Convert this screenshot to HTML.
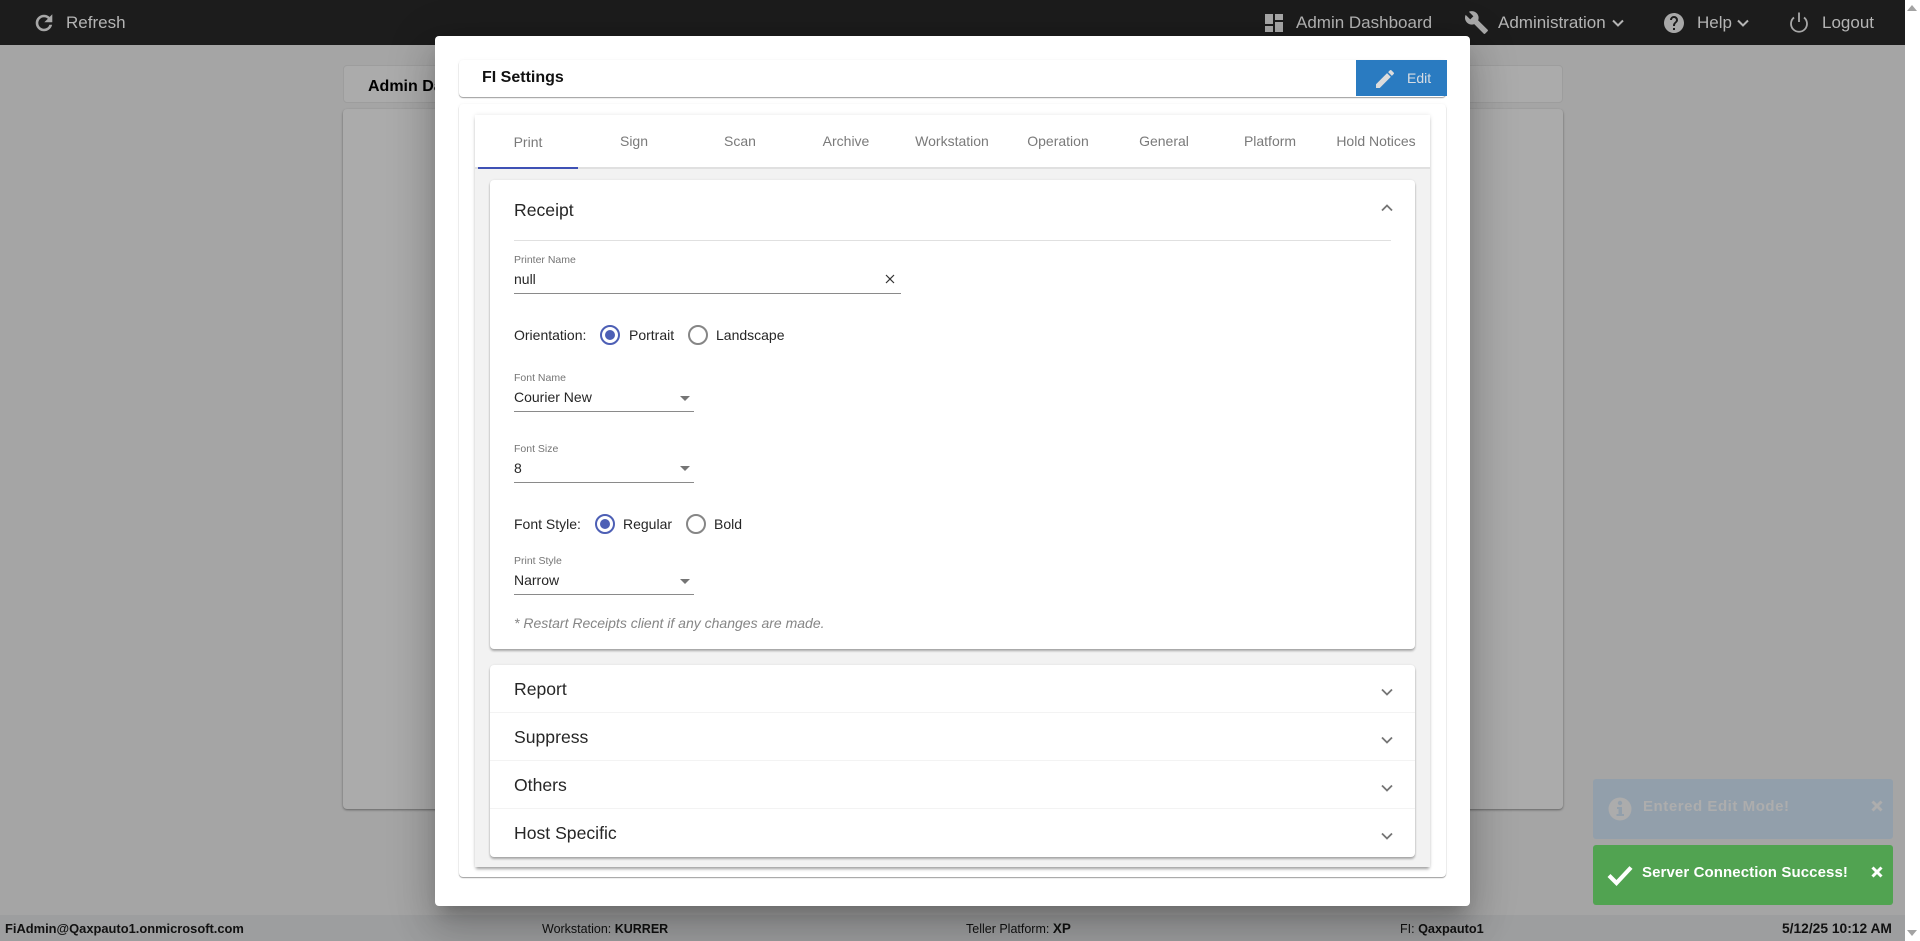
<!DOCTYPE html>
<html lang="en"><head><meta charset="utf-8"><title>FI Settings</title>
<style>
html,body{margin:0;padding:0;width:1920px;height:941px;overflow:hidden;background:#fff;font-family:"Liberation Sans",Arial,sans-serif}
div,span,svg{position:absolute;box-sizing:border-box}
.t{white-space:nowrap;line-height:20px;height:20px}
.nav{color:#b4b4b4;font-size:17px;line-height:24px;height:24px;white-space:nowrap}
.ic{fill:#a8a8a8}
.tab{top:131px;width:106px;text-align:center;font-size:14px;color:#7a7a7a;line-height:20px;white-space:nowrap}
.lbl{left:514px;font-size:10.5px;color:#757575;line-height:14px;white-space:nowrap}
.val{left:514px;font-size:14px;color:#262626;line-height:20px;white-space:nowrap}
.ul{left:514px;height:1px;background:#8a8a8a}
.arr{width:0;height:0;border-left:5px solid transparent;border-right:5px solid transparent;border-top:5px solid #757575}
.radio{width:20px;height:20px;border:2px solid #868686;border-radius:50%}
.radio.on{border-color:#4d5fb5}
.radio.on:after{content:"";position:absolute;left:3px;top:3px;width:10px;height:10px;border-radius:50%;background:#4d5fb5}
.h{left:514px;font-size:17.6px;color:#262626;line-height:24px;white-space:nowrap}
.f{top:919px;font-size:12.5px;color:#111;line-height:20px;white-space:nowrap}
.f b{font-size:12.7px}
</style></head><body>
<div style="left:0;top:0;width:1905px;height:941px;background:#a5a5a5;overflow:hidden">
  <div style="left:0;top:915px;width:1905px;height:26px;background:#9d9e9f"></div>
  <div style="left:343px;top:65px;width:1220px;height:38px;background:#ababab;border:1px solid #9d9d9d;border-radius:4px"></div>
  <div style="left:343px;top:109px;width:1220px;height:700px;background:#ababab;border-radius:4px;box-shadow:0 1px 2px rgba(0,0,0,.4)"></div>
  <div class="t" style="left:368px;top:77px;font-size:16px;font-weight:bold;color:#000">Admin Dashboard</div>
</div>
<div style="left:1905px;top:0;width:15px;height:941px;background:#fff"></div>
<div style="left:1907px;top:5px;width:0;height:0;border-left:5px solid transparent;border-right:5px solid transparent;border-bottom:6px solid #a3a3a3"></div>
<div style="left:1907px;top:930px;width:0;height:0;border-left:5px solid transparent;border-right:5px solid transparent;border-top:6px solid #a3a3a3"></div>

<!-- top bar -->
<div style="left:0;top:0;width:1905px;height:45px;background:#1c1c1c"></div>
<svg style="left:32px;top:11px" width="24" height="24" viewBox="0 0 24 24"><path class="ic" stroke="#a8a8a8" stroke-width=".6" d="M17.65,6.35C16.2,4.9 14.21,4 12,4A8,8 0 0,0 4,12A8,8 0 0,0 12,20C15.73,20 18.84,17.45 19.73,14H17.65C16.83,16.33 14.61,18 12,18A6,6 0 0,1 6,12A6,6 0 0,1 12,6C13.66,6 15.14,6.69 16.22,7.78L13,11H20V4L17.65,6.35Z"/></svg>
<div class="nav" style="left:66px;top:11px">Refresh</div>
<svg style="left:1262px;top:11px" width="24" height="24" viewBox="0 0 24 24"><path class="ic" d="M13,3V9H21V3M13,21H21V11H13M3,21H11V15H3M3,13H11V3H3V13Z"/></svg>
<div class="nav" style="left:1296px;top:11px">Admin Dashboard</div>
<svg style="left:1464px;top:10px" width="25" height="25" viewBox="0 0 24 24"><path class="ic" d="M22.7,19L13.6,9.9C14.5,7.6 14,4.9 12.1,3C10.1,1 7.1,0.6 4.7,1.7L9,6L6,9L1.6,4.7C0.4,7.1 0.9,10.1 2.9,12.1C4.8,14 7.5,14.5 9.8,13.6L18.9,22.7C19.3,23.1 19.9,23.1 20.3,22.7L22.6,20.4C23.1,20 23.1,19.3 22.7,19Z"/></svg>
<div class="nav" style="left:1498px;top:11px">Administration</div>
<svg style="left:1611px;top:18px" width="14" height="10" viewBox="0 0 14 10"><path d="M2 2.5L7 7.5L12 2.5" fill="none" stroke="#b4b4b4" stroke-width="2"/></svg>
<svg style="left:1662px;top:11px" width="24" height="24" viewBox="0 0 24 24"><path class="ic" d="M15.07,11.25L14.17,12.17C13.45,12.89 13,13.5 13,15H11V14.5C11,13.39 11.45,12.39 12.17,11.67L13.41,10.41C13.78,10.05 14,9.55 14,9C14,7.89 13.1,7 12,7A2,2 0 0,0 10,9H8A4,4 0 0,1 12,5A4,4 0 0,1 16,9C16,9.88 15.64,10.67 15.07,11.25M13,19H11V17H13M12,2A10,10 0 0,0 2,12A10,10 0 0,0 12,22A10,10 0 0,0 22,12C22,6.47 17.5,2 12,2Z"/></svg>
<div class="nav" style="left:1697px;top:11px">Help</div>
<svg style="left:1736px;top:18px" width="14" height="10" viewBox="0 0 14 10"><path d="M2 2.5L7 7.5L12 2.5" fill="none" stroke="#b4b4b4" stroke-width="2"/></svg>
<svg style="left:1788px;top:11px" width="22" height="22" viewBox="0 0 22 22"><path d="M6 6.5A8 8 0 1 0 16 6.5M11 1.5V11" fill="none" stroke="#a8a8a8" stroke-width="1.8"/></svg>
<div class="nav" style="left:1822px;top:11px">Logout</div>

<!-- footer text -->
<div class="f" style="left:5px"><b style="font-size:12.9px">FiAdmin@Qaxpauto1.onmicrosoft.com</b></div>
<div class="f" style="left:542px">Workstation: <b style="font-size:12.5px">KURRER</b></div>
<div class="f" style="left:966px">Teller Platform: <b style="font-size:13.5px">XP</b></div>
<div class="f" style="left:1400px">FI: <b>Qaxpauto1</b></div>
<div class="f" style="left:1782px"><b style="font-size:13.8px">5/12/25 10:12 AM</b></div>

<!-- toasts -->
<div style="left:1593px;top:779px;width:300px;height:60px;background:#929fab;border-radius:3px"></div>
<svg style="left:1608px;top:797px" width="24" height="24" viewBox="0 0 24 24"><circle cx="12" cy="12" r="11.5" fill="#acacac"/><circle cx="12" cy="6" r="2.2" fill="#929fab"/><path d="M9 10H14V17H16V19H8.5V17H10.5V12H9Z" fill="#929fab"/></svg>
<div class="t" style="left:1643px;top:797px;font-size:15px;font-weight:bold;color:#adadad;letter-spacing:.55px">Entered Edit Mode!</div>
<svg style="left:1871px;top:800px" width="12" height="12" viewBox="0 0 12 12"><path d="M1.5 1.5L10.5 10.5M10.5 1.5L1.5 10.5" stroke="#adadad" stroke-width="3"/></svg>
<div style="left:1593px;top:845px;width:300px;height:60px;background:#51a351;border-radius:3px"></div>
<svg style="left:1607px;top:864px" width="26" height="22" viewBox="0 0 26 22"><path d="M2 11.5L9.5 19L24 3.5" fill="none" stroke="#fff" stroke-width="4.2"/></svg>
<div class="t" style="left:1642px;top:863px;font-size:15px;font-weight:bold;color:#fff;letter-spacing:.1px">Server Connection Success!</div>
<svg style="left:1871px;top:866px" width="12" height="12" viewBox="0 0 12 12"><path d="M1.5 1.5L10.5 10.5M10.5 1.5L1.5 10.5" stroke="#fff" stroke-width="3"/></svg>

<!-- modal -->
<div style="left:435px;top:36px;width:1035px;height:870px;background:#fff;border-radius:4px;box-shadow:0 11px 15px -7px rgba(0,0,0,.2),0 24px 38px 3px rgba(0,0,0,.14),0 9px 46px 8px rgba(0,0,0,.12)"></div>
<div style="left:459px;top:60px;width:987px;height:37px;background:#fff;border-radius:4px;box-shadow:0 1px 1px rgba(0,0,0,.38),0 0 3px rgba(0,0,0,.05)"></div>
<div class="t" style="left:482px;top:68px;font-size:16px;font-weight:bold;color:#111">FI Settings</div>
<div style="left:1356px;top:60px;width:91px;height:36px;background:#2a7bc1"></div>
<svg style="left:1373px;top:67px" width="24" height="24" viewBox="0 0 24 24"><path fill="#dcdcdc" d="M20.71,7.04C21.1,6.65 21.1,6 20.71,5.63L18.37,3.29C18,2.9 17.35,2.9 16.96,3.29L15.12,5.12L18.87,8.87M3,17.25V21H6.75L17.81,9.93L14.06,6.18L3,17.25Z"/></svg>
<div class="t" style="left:1407px;top:68px;font-size:14px;color:#d8dde3">Edit</div>

<div style="left:459px;top:104px;width:987px;height:773px;background:#fff;border-radius:4px;box-shadow:0 1px 1px rgba(0,0,0,.38),0 0 3px rgba(0,0,0,.05)"></div>
<div style="left:475px;top:115px;width:955px;height:752px;background:#f2f2f2;box-shadow:0 3px 3px -1px rgba(0,0,0,.35),0 0 4px rgba(0,0,0,.1)"></div>
<div style="left:475px;top:115px;width:955px;height:54px;background:#fff;border-bottom:2px solid #e0e0e0"></div>
<div style="left:478px;top:167px;width:100px;height:2px;background:#3f51b5"></div>
<div class="tab" style="left:475px;top:132px">Print</div>
<div class="tab" style="left:581px">Sign</div>
<div class="tab" style="left:687px">Scan</div>
<div class="tab" style="left:793px">Archive</div>
<div class="tab" style="left:899px">Workstation</div>
<div class="tab" style="left:1005px">Operation</div>
<div class="tab" style="left:1111px">General</div>
<div class="tab" style="left:1217px">Platform</div>
<div class="tab" style="left:1323px">Hold Notices</div>

<!-- receipt panel -->
<div style="left:490px;top:180px;width:925px;height:469px;background:#fff;border-radius:4px;box-shadow:0 2px 2px rgba(0,0,0,.3),0 0 2px rgba(0,0,0,.08)"></div>
<div class="h" style="top:198px">Receipt</div>
<svg style="left:1380px;top:203px" width="14" height="10" viewBox="0 0 14 10"><path d="M2 7.5L7 2.5L12 7.5" fill="none" stroke="#757575" stroke-width="1.8"/></svg>
<div style="left:514px;top:240px;width:877px;height:1px;background:#e0e0e0"></div>
<div class="lbl" style="top:253px">Printer Name</div>
<div class="val" style="top:269px">null</div>
<svg style="left:885px;top:274px" width="10" height="10" viewBox="0 0 10 10"><path d="M1 1L9 9M9 1L1 9" stroke="#333" stroke-width="1.2"/></svg>
<div class="ul" style="top:293px;width:387px"></div>

<div class="val" style="top:325px">Orientation:</div>
<div class="radio on" style="left:600px;top:325px"></div>
<div class="val" style="left:629px;top:325px">Portrait</div>
<div class="radio" style="left:688px;top:325px"></div>
<div class="val" style="left:716px;top:325px">Landscape</div>

<div class="lbl" style="top:371px">Font Name</div>
<div class="val" style="top:387px">Courier New</div>
<div class="arr" style="left:680px;top:396px"></div>
<div class="ul" style="top:411px;width:180px"></div>

<div class="lbl" style="top:442px">Font Size</div>
<div class="val" style="top:458px">8</div>
<div class="arr" style="left:680px;top:466px"></div>
<div class="ul" style="top:482px;width:180px"></div>

<div class="val" style="top:514px">Font Style:</div>
<div class="radio on" style="left:595px;top:514px"></div>
<div class="val" style="left:623px;top:514px">Regular</div>
<div class="radio" style="left:686px;top:514px"></div>
<div class="val" style="left:714px;top:514px">Bold</div>

<div class="lbl" style="top:554px">Print Style</div>
<div class="val" style="top:570px">Narrow</div>
<div class="arr" style="left:680px;top:579px"></div>
<div class="ul" style="top:594px;width:180px"></div>

<div class="val" style="top:613px;font-style:italic;color:#858585">* Restart Receipts client if any changes are made.</div>

<!-- collapsed panels -->
<div style="left:490px;top:665px;width:925px;height:192px;background:#fff;border-radius:4px;box-shadow:0 2px 2px rgba(0,0,0,.3),0 0 2px rgba(0,0,0,.08)"></div>
<div style="left:490px;top:712px;width:925px;height:1px;background:#f3f3f3"></div>
<div style="left:490px;top:760px;width:925px;height:1px;background:#f3f3f3"></div>
<div style="left:490px;top:808px;width:925px;height:1px;background:#f3f3f3"></div>
<div class="h" style="top:677px">Report</div>
<div class="h" style="top:725px">Suppress</div>
<div class="h" style="top:773px">Others</div>
<div class="h" style="top:821px">Host Specific</div>
<svg style="left:1380px;top:687px" width="14" height="10" viewBox="0 0 14 10"><path d="M2 2.5L7 7.5L12 2.5" fill="none" stroke="#757575" stroke-width="1.8"/></svg>
<svg style="left:1380px;top:735px" width="14" height="10" viewBox="0 0 14 10"><path d="M2 2.5L7 7.5L12 2.5" fill="none" stroke="#757575" stroke-width="1.8"/></svg>
<svg style="left:1380px;top:783px" width="14" height="10" viewBox="0 0 14 10"><path d="M2 2.5L7 7.5L12 2.5" fill="none" stroke="#757575" stroke-width="1.8"/></svg>
<svg style="left:1380px;top:831px" width="14" height="10" viewBox="0 0 14 10"><path d="M2 2.5L7 7.5L12 2.5" fill="none" stroke="#757575" stroke-width="1.8"/></svg>
</body></html>
